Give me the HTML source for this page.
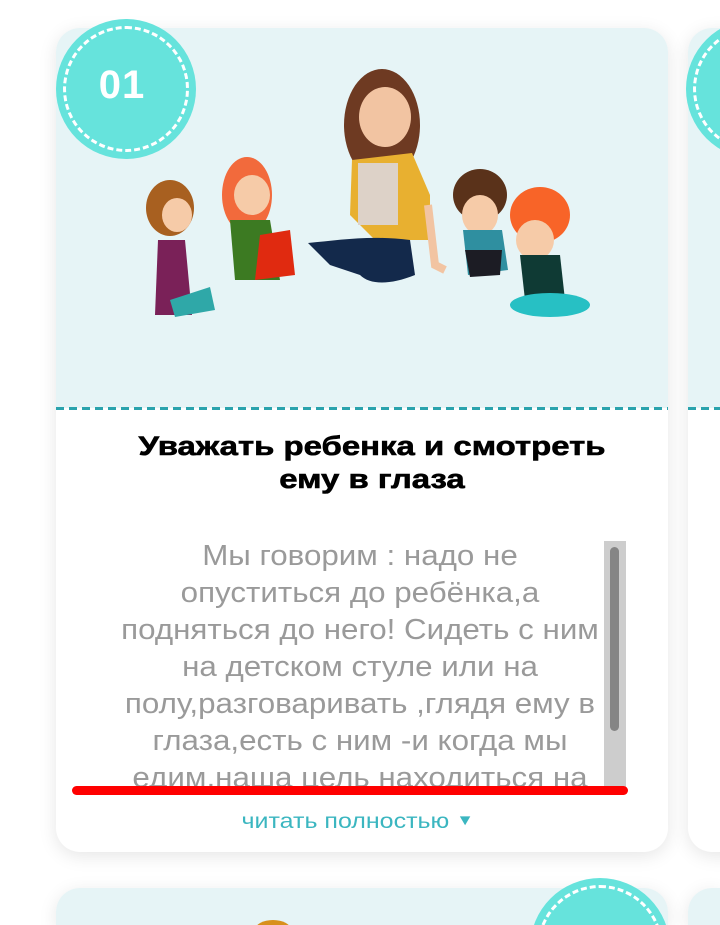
<!DOCTYPE html>
<html><head><meta charset="utf-8"><style>
*{margin:0;padding:0;box-sizing:border-box}
html,body{width:720px;height:925px;overflow:hidden}
body{background:#fff;position:relative;font-family:"Liberation Sans",sans-serif}
.card{position:absolute;background:#fff;border-radius:24px;box-shadow:0 4px 18px rgba(0,0,0,.1);overflow:hidden}
.top{position:absolute;left:0;top:0;right:0;height:380px;background:#e6f4f6}
.dash{position:absolute;left:0;right:0;top:379px;height:3px;background:repeating-linear-gradient(90deg,#2aa3ad 0 8px,transparent 8px 13px)}
.circ{position:absolute;width:140px;height:140px;border-radius:50%;background:#66e3dc}
.circ:after{content:"";position:absolute;left:7px;top:7px;right:7px;bottom:7px;border-radius:50%;border:3px dashed #fff}
.num{position:absolute;width:100%;text-align:center;top:44px;left:-4px;color:#fff;font-weight:bold;font-size:40px;letter-spacing:1px}
.title{position:absolute;left:12px;width:720px;top:430px;text-align:center;font-weight:bold;font-size:27px;line-height:33px;color:#000;white-space:nowrap;transform:scaleX(1.22);transform-origin:360px 0;-webkit-text-stroke:.6px #000}
.body{position:absolute;left:0;width:720px;top:538px;height:250px;overflow:hidden}
.body div{text-align:center;font-size:29px;line-height:37px;color:#9a9a9a;white-space:nowrap;transform:scaleX(1.08);transform-origin:360px 0}
</style></head><body>
<div class="card" style="left:688px;top:28px;width:600px;height:824px"><div class="top"></div><div class="dash"></div></div>
<div class="circ" style="left:686px;top:19px"></div>
<div class="card" style="left:56px;top:28px;width:612px;height:824px">
<div class="top"></div><div class="dash"></div>
</div>
<svg style="position:absolute;left:130px;top:65px" width="480" height="260">
<ellipse cx="252" cy="60" rx="38" ry="56" fill="#6e3a22"/>
<ellipse cx="255" cy="52" rx="26" ry="30" fill="#f2c4a2"/>
<path d="M222 95 L282 88 L300 130 L300 175 L245 175 L220 150Z" fill="#e8b030"/>
<rect x="228" y="98" width="40" height="62" fill="#ddd2c8"/>
<path d="M178 178 C210 175 240 170 280 175 L285 210 C260 220 240 220 230 210 L200 200Z" fill="#13294b"/>
<path d="M298 140 L305 200 L315 205" stroke="#f2c4a2" stroke-width="8" fill="none"/>
<ellipse cx="117" cy="130" rx="25" ry="38" fill="#f26a3c"/>
<ellipse cx="122" cy="130" rx="18" ry="20" fill="#f6cba8"/>
<path d="M100 155 L140 155 L150 215 L105 215Z" fill="#3c7a22"/>
<path d="M130 170 L160 165 L165 210 L125 215Z" fill="#e02a10"/>
<ellipse cx="40" cy="143" rx="24" ry="28" fill="#a86020"/>
<ellipse cx="47" cy="150" rx="15" ry="17" fill="#f6cba8"/>
<path d="M28 175 L55 175 L62 250 L25 250Z" fill="#7a2158"/>
<path d="M40 235 L80 222 L85 245 L45 252Z" fill="#2fa8a8"/>
<ellipse cx="350" cy="130" rx="27" ry="26" fill="#5a321a"/>
<ellipse cx="350" cy="150" rx="18" ry="20" fill="#f6cba8"/>
<path d="M333 165 L372 165 L378 205 L338 210Z" fill="#2f8fa0"/>
<path d="M335 185 L372 185 L370 210 L340 212Z" fill="#1c1c24"/>
<ellipse cx="410" cy="150" rx="30" ry="28" fill="#f86428"/>
<ellipse cx="405" cy="175" rx="19" ry="20" fill="#f6cba8"/>
<path d="M390 190 L430 190 L435 235 L395 235Z" fill="#0f3a34"/>
<ellipse cx="420" cy="240" rx="40" ry="12" fill="#27c0c4"/>
</svg>
<div class="circ" style="left:56px;top:19px"><div class="num">01</div></div>
<div class="title">Уважать ребенка и смотреть<br>ему в глаза</div>
<div class="body">
<div>Мы говорим : надо не</div>
<div>опуститься до ребёнка,а</div>
<div>подняться до него! Сидеть с ним</div>
<div>на детском стуле или на</div>
<div>полу,разговаривать ,глядя ему в</div>
<div>глаза,есть с ним -и когда мы</div>
<div>едим,наша цель находиться на</div>
</div>
<div style="position:absolute;left:604px;top:541px;width:22px;height:249px;background:#cdcdcd"></div>
<div style="position:absolute;left:610px;top:547px;width:9px;height:184px;background:#858585;border-radius:5px"></div>
<div style="position:absolute;left:72px;top:786px;width:556px;height:9px;background:#f00;border-radius:5px"></div>
<div style="position:absolute;left:0;width:720px;top:810px;text-align:center;font-size:21px;color:#3bb6c0;white-space:nowrap;transform:scaleX(1.19);transform-origin:372px 0">читать полностью <span style="font-size:15px;vertical-align:3px">▼</span></div>
<div class="card" style="left:56px;top:888px;width:612px;height:37px;border-radius:24px 24px 0 0"><div class="top"></div></div>
<div class="card" style="left:688px;top:888px;width:32px;height:37px;border-radius:24px 0 0 0"><div class="top"></div></div>
<div class="circ" style="left:530px;top:878px"></div>
<div style="position:absolute;left:255px;top:920px;width:36px;height:20px;border-radius:50%;background:#d8901c"></div>
</body></html>
